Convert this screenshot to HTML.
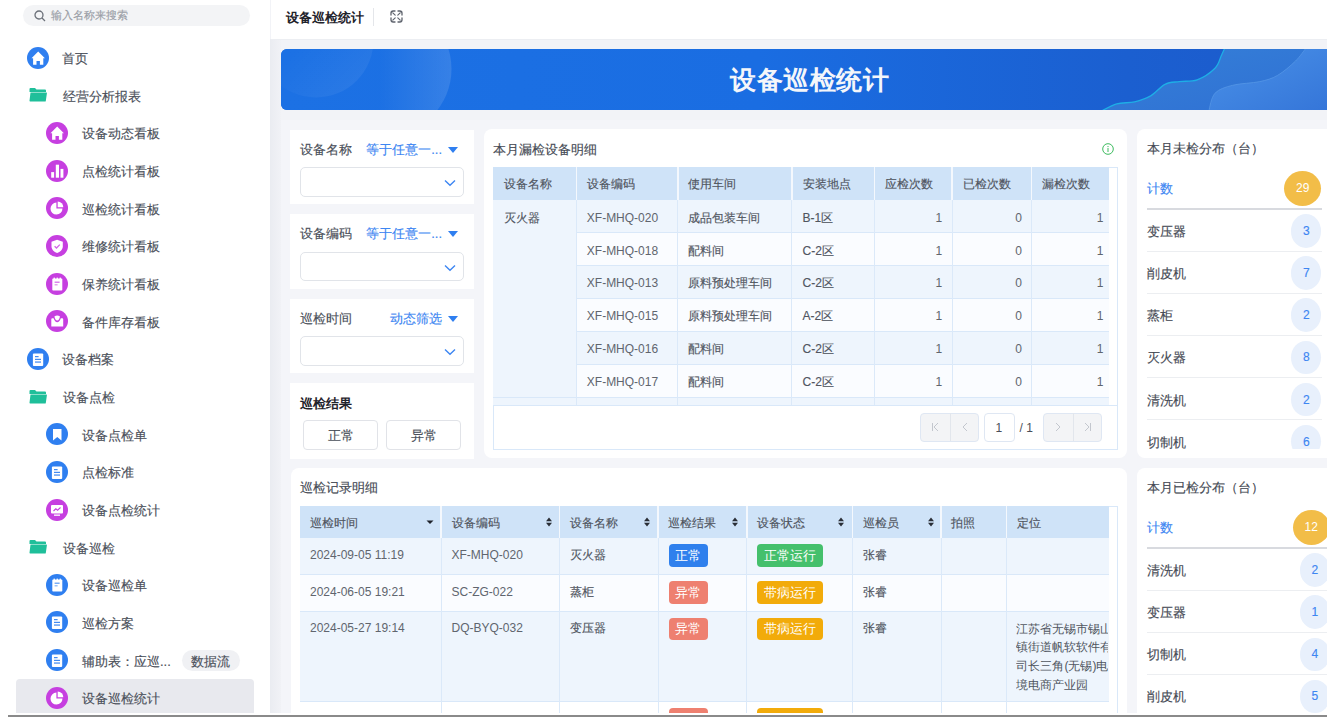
<!DOCTYPE html><html><head><meta charset="utf-8"><style>
*{box-sizing:border-box;margin:0;padding:0}
html,body{width:1327px;height:717px;overflow:hidden}
body{position:relative;background:#f2f3f7;font-family:"Liberation Sans",sans-serif;color:#4a4f59;font-size:13px}
.abs{position:absolute}
.t{position:absolute;white-space:nowrap;line-height:1;-webkit-text-stroke:0.15px currentColor}
.t.nb{-webkit-text-stroke:0}
#side{left:0;top:0;width:270px;height:717px;background:#fff}
#sideshadow{left:270px;top:39px;width:11px;height:678px;background:linear-gradient(90deg,#eaecf1,#f1f2f6)}
#search{left:23px;top:5px;width:227px;height:21px;border-radius:11px;background:#f3f4f6}
.ic{position:absolute;width:22px;height:22px;border-radius:50%}
.ic svg{position:absolute;left:0;top:0}
.blue{background:#2f7ff0}
.purple{background:#c63fe0}
#hdr{left:271px;top:0;width:1056px;height:40px;background:#fff;border-bottom:1px solid #eceef2}
#banner{left:281px;top:49px;width:1058px;height:61px;border-radius:6px;overflow:hidden;background:linear-gradient(90deg,#1d72e4 0%,#1a6fe3 40%,#1b62d3 75%,#1f5fd0 100%)}
#wrap{left:281px;top:120px;width:1060px;height:600px;background:#f4f5f9}
.card{position:absolute;background:#fff;border-radius:8px}
.fcard{position:absolute;background:#fff;left:290px;width:184px}
.tri{position:absolute;width:0;height:0;border-left:5px solid transparent;border-right:5px solid transparent;border-top:6px solid #2f7ff0}
.sel{position:absolute;left:10px;width:164px;height:30px;border:1px solid #e1e4e9;border-radius:5px;background:#fff}
.bottomline{left:8px;top:715.2px;width:1319px;height:1.8px;background:#8a8a8a}
.whitestrip{left:0;top:712.8px;width:1327px;height:2.6px;background:#fff}
</style></head><body>
<div id="wrap" class="abs"></div>
<div id="side" class="abs">
<div id="search" class="abs"><svg style="position:absolute;left:11px;top:5px" width="12" height="12" viewBox="0 0 12 12"><circle cx="5" cy="5" r="4" fill="none" stroke="#6b7079" stroke-width="1.3"/><line x1="8" y1="8" x2="11" y2="11" stroke="#6b7079" stroke-width="1.3"/></svg><span class="t" style="left:28px;top:5px;font-size:11px;color:#9a9ea6">输入名称来搜索</span></div>
<div class="ic blue" style="left:27px;top:46.70px"><svg width="22" height="22" viewBox="0 0 22 22"><path d="M11.2 4.6 L17.9 11.2 L16.3 11.2 L16.3 17.7 L12.9 17.7 L12.9 14.1 L9.5 14.1 L9.5 17.7 L6.1 17.7 L6.1 11.2 L4.5 11.2 Z" fill="#fff"/></svg></div>
<span class="t" style="left:62px;top:52.10px;font-size:13px;color:#4b505a">首页</span>
<svg class="abs" style="left:29px;top:88.35px" width="18" height="14" viewBox="0 0 18 14"><path d="M0.5 1 Q0.5 0 1.5 0 L6 0 L7.5 1.5 L16 1.5 Q17 1.5 17 2.5 L17 4 L0.5 4 Z" fill="#1fbf9a"/><path d="M1.5 4.5 L17.5 4.5 Q18 4.5 17.9 5.2 L16.8 13 Q16.7 13.6 16 13.6 L1.2 13.6 Q0.4 13.6 0.5 12.8 Z" fill="#1fbf9a"/></svg>
<span class="t" style="left:63px;top:89.75px;font-size:13px;color:#4b505a">经营分析报表</span>
<div class="ic purple" style="left:46px;top:122.00px"><svg width="22" height="22" viewBox="0 0 22 22"><path d="M11.2 4.6 L17.9 11.2 L16.3 11.2 L16.3 17.7 L12.9 17.7 L12.9 14.1 L9.5 14.1 L9.5 17.7 L6.1 17.7 L6.1 11.2 L4.5 11.2 Z" fill="#fff"/></svg></div>
<span class="t" style="left:82px;top:127.40px;font-size:13px;color:#4b505a">设备动态看板</span>
<div class="ic purple" style="left:46px;top:159.65px"><svg width="22" height="22" viewBox="0 0 22 22"><rect x="5.2" y="12.1" width="2.9" height="5.6" fill="#fff"/><rect x="9.8" y="4.7" width="3.2" height="13" fill="#fff"/><rect x="14.5" y="8.9" width="2.9" height="8.8" fill="#fff"/></svg></div>
<span class="t" style="left:82px;top:165.05px;font-size:13px;color:#4b505a">点检统计看板</span>
<div class="ic purple" style="left:46px;top:197.30px"><svg width="22" height="22" viewBox="0 0 22 22"><path d="M10.4 5.6 A6 6 0 1 0 16.5 11.6 L10.4 11.6 Z" fill="#fff"/><path d="M11.7 4.6 A5.6 5.6 0 0 1 17.3 10.2 L11.7 10.2 Z" fill="#fff"/></svg></div>
<span class="t" style="left:82px;top:202.70px;font-size:13px;color:#4b505a">巡检统计看板</span>
<div class="ic purple" style="left:46px;top:234.95px"><svg width="22" height="22" viewBox="0 0 22 22"><path d="M11.1 4.8 L16.8 6.8 L16.8 11.2 C16.8 14.6 14.3 16.8 11.1 17.9 C7.9 16.8 5.5 14.6 5.5 11.2 L5.5 6.8 Z" fill="#fff"/><path d="M8.6 11.2 L10.5 13 L13.8 9.6" fill="none" stroke="#c63fe0" stroke-width="1.3" stroke-opacity="0.8"/></svg></div>
<span class="t" style="left:82px;top:240.35px;font-size:13px;color:#4b505a">维修统计看板</span>
<div class="ic purple" style="left:46px;top:272.60px"><svg width="22" height="22" viewBox="0 0 22 22"><rect x="6.3" y="5.6" width="10" height="12" rx="0.8" fill="#fff"/><rect x="7.6" y="4.6" width="1.3" height="2" fill="#fff"/><rect x="10.6" y="4.6" width="1.3" height="2" fill="#fff"/><rect x="13.6" y="4.6" width="1.3" height="2" fill="#fff"/><rect x="8.6" y="8.6" width="5" height="1.2" fill="#c63fe0" fill-opacity="0.8"/><rect x="8.6" y="11.2" width="3" height="1.2" fill="#c63fe0" fill-opacity="0.6"/></svg></div>
<span class="t" style="left:82px;top:278.00px;font-size:13px;color:#4b505a">保养统计看板</span>
<div class="ic purple" style="left:46px;top:310.25px"><svg width="22" height="22" viewBox="0 0 22 22"><path d="M5.3 9.2 Q5.3 8.2 6.3 8.2 L7.6 8.2 Q9 12.2 11.2 12.2 Q13.4 12.2 14.8 8.2 L16.2 8.2 Q17.2 8.2 17.2 9.2 L17.2 16.6 L5.3 16.6 Z" fill="#fff"/><path d="M8.4 6.4 Q11.2 4.6 14 6.4 Q13.2 10.4 11.2 10.4 Q9.2 10.4 8.4 6.4 Z" fill="#fff"/></svg></div>
<span class="t" style="left:82px;top:315.65px;font-size:13px;color:#4b505a">备件库存看板</span>
<div class="ic blue" style="left:27px;top:347.90px"><svg width="22" height="22" viewBox="0 0 22 22"><rect x="5.9" y="5.4" width="10.3" height="12.5" rx="1" fill="#fff"/><rect x="8" y="8.1" width="3.6" height="1.1" fill="#2f7ff0"/><rect x="8" y="10.8" width="6" height="1.1" fill="#2f7ff0"/><rect x="8" y="13.5" width="6" height="1.1" fill="#2f7ff0"/></svg></div>
<span class="t" style="left:62px;top:353.30px;font-size:13px;color:#4b505a">设备档案</span>
<svg class="abs" style="left:29px;top:389.55px" width="18" height="14" viewBox="0 0 18 14"><path d="M0.5 1 Q0.5 0 1.5 0 L6 0 L7.5 1.5 L16 1.5 Q17 1.5 17 2.5 L17 4 L0.5 4 Z" fill="#1fbf9a"/><path d="M1.5 4.5 L17.5 4.5 Q18 4.5 17.9 5.2 L16.8 13 Q16.7 13.6 16 13.6 L1.2 13.6 Q0.4 13.6 0.5 12.8 Z" fill="#1fbf9a"/></svg>
<span class="t" style="left:63px;top:390.95px;font-size:13px;color:#4b505a">设备点检</span>
<div class="ic blue" style="left:46px;top:423.20px"><svg width="22" height="22" viewBox="0 0 22 22"><path d="M7 5.9 L15.5 5.9 L15.5 17.6 L11.25 13.9 L7 17.6 Z" fill="#fff"/></svg></div>
<span class="t" style="left:82px;top:428.60px;font-size:13px;color:#4b505a">设备点检单</span>
<div class="ic blue" style="left:46px;top:460.85px"><svg width="22" height="22" viewBox="0 0 22 22"><rect x="5.9" y="5.4" width="10.3" height="12.5" rx="1" fill="#fff"/><rect x="8" y="8.1" width="3.6" height="1.1" fill="#2f7ff0"/><rect x="8" y="10.8" width="6" height="1.1" fill="#2f7ff0"/><rect x="8" y="13.5" width="6" height="1.1" fill="#2f7ff0"/></svg></div>
<span class="t" style="left:82px;top:466.25px;font-size:13px;color:#4b505a">点检标准</span>
<div class="ic purple" style="left:46px;top:498.50px"><svg width="22" height="22" viewBox="0 0 22 22"><rect x="5" y="6" width="12" height="8.5" rx="1" fill="#fff"/><rect x="8" y="15.5" width="6" height="1.3" fill="#fff"/><path d="M7.5 12 L9.8 9.8 L11.6 11.2 L14.5 8.5" fill="none" stroke="#c63fe0" stroke-width="1.1"/></svg></div>
<span class="t" style="left:82px;top:503.90px;font-size:13px;color:#4b505a">设备点检统计</span>
<svg class="abs" style="left:29px;top:540.15px" width="18" height="14" viewBox="0 0 18 14"><path d="M0.5 1 Q0.5 0 1.5 0 L6 0 L7.5 1.5 L16 1.5 Q17 1.5 17 2.5 L17 4 L0.5 4 Z" fill="#1fbf9a"/><path d="M1.5 4.5 L17.5 4.5 Q18 4.5 17.9 5.2 L16.8 13 Q16.7 13.6 16 13.6 L1.2 13.6 Q0.4 13.6 0.5 12.8 Z" fill="#1fbf9a"/></svg>
<span class="t" style="left:63px;top:541.55px;font-size:13px;color:#4b505a">设备巡检</span>
<div class="ic blue" style="left:46px;top:573.80px"><svg width="22" height="22" viewBox="0 0 22 22"><rect x="6.3" y="5.6" width="10" height="12" rx="0.8" fill="#fff"/><rect x="7.6" y="4.6" width="1.3" height="2" fill="#fff"/><rect x="10.6" y="4.6" width="1.3" height="2" fill="#fff"/><rect x="13.6" y="4.6" width="1.3" height="2" fill="#fff"/><rect x="8.6" y="8.6" width="5" height="1.2" fill="#2f7ff0" fill-opacity="0.8"/><rect x="8.6" y="11.2" width="3" height="1.2" fill="#2f7ff0" fill-opacity="0.6"/></svg></div>
<span class="t" style="left:82px;top:579.20px;font-size:13px;color:#4b505a">设备巡检单</span>
<div class="ic blue" style="left:46px;top:611.45px"><svg width="22" height="22" viewBox="0 0 22 22"><rect x="5.9" y="5.4" width="10.3" height="12.5" rx="1" fill="#fff"/><rect x="8" y="8.1" width="3.6" height="1.1" fill="#2f7ff0"/><rect x="8" y="10.8" width="6" height="1.1" fill="#2f7ff0"/><rect x="8" y="13.5" width="6" height="1.1" fill="#2f7ff0"/></svg></div>
<span class="t" style="left:82px;top:616.85px;font-size:13px;color:#4b505a">巡检方案</span>
<div class="ic blue" style="left:46px;top:649.10px"><svg width="22" height="22" viewBox="0 0 22 22"><rect x="5.9" y="5.4" width="10.3" height="12.5" rx="1" fill="#fff"/><rect x="8" y="8.1" width="3.6" height="1.1" fill="#2f7ff0"/><rect x="8" y="10.8" width="6" height="1.1" fill="#2f7ff0"/><rect x="8" y="13.5" width="6" height="1.1" fill="#2f7ff0"/></svg></div>
<span class="t" style="left:82px;top:654.50px;font-size:13px;color:#4b505a">辅助表：应巡...</span>
<div class="abs" style="left:182px;top:649.60px;width:58px;height:21px;border-radius:11px;background:#f0f1f4"></div>
<span class="t" style="left:191px;top:654.50px;font-size:13px;color:#4b505a">数据流</span>
<div class="abs" style="left:16px;top:678.75px;width:238px;height:40px;border-radius:4px;background:#e8e9ee"></div>
<div class="ic purple" style="left:46px;top:686.75px"><svg width="22" height="22" viewBox="0 0 22 22"><path d="M10.4 5.6 A6 6 0 1 0 16.5 11.6 L10.4 11.6 Z" fill="#fff"/><path d="M11.7 4.6 A5.6 5.6 0 0 1 17.3 10.2 L11.7 10.2 Z" fill="#fff"/></svg></div>
<span class="t" style="left:82px;top:692.15px;font-size:13px;color:#4b505a">设备巡检统计</span>
</div>
<div id="sideshadow" class="abs"></div>
<div id="hdr" class="abs"><span class="t nb" style="left:15px;top:11px;font-size:13px;font-weight:bold;color:#1f232b">设备巡检统计</span><div class="abs" style="left:102px;top:8px;width:1px;height:18px;background:#e4e6ea"></div><svg class="abs" style="left:118.8px;top:10px" width="13" height="13" viewBox="0 0 13 13" fill="none" stroke="#5d626c" stroke-width="1.3" stroke-linecap="round"><path d="M1 5V3.2Q1 1 3.2 1H5M8 1H9.8Q12 1 12 3.2V5M12 8V9.8Q12 12 9.8 12H8M5 12H3.2Q1 12 1 9.8V8"/><path d="M2.8 2.8L5.2 5.2M10.2 2.8L7.8 5.2M10.2 10.2L7.8 7.8M2.8 10.2L5.2 7.8" stroke-width="1.1"/></svg></div>
<div id="banner" class="abs"><svg class="abs" style="left:0;top:0" width="1058" height="61" viewBox="0 0 1058 61"><defs><linearGradient id="bg" x1="0" y1="0" x2="1" y2="0"><stop offset="0" stop-color="#1c71e4"/><stop offset="0.45" stop-color="#1a6de2"/><stop offset="0.8" stop-color="#1b5fd0"/><stop offset="1" stop-color="#1c5acb"/></linearGradient><linearGradient id="c2" x1="0" y1="0" x2="1" y2="0"><stop offset="0.45" stop-color="#fff" stop-opacity="0"/><stop offset="1" stop-color="#fff" stop-opacity="0.12"/></linearGradient><linearGradient id="c1" x1="0" y1="0" x2="1" y2="1"><stop offset="0.45" stop-color="#fff" stop-opacity="0.0"/><stop offset="1" stop-color="#fff" stop-opacity="0.08"/></linearGradient><linearGradient id="wv1" x1="0" y1="0" x2="1" y2="1"><stop offset="0" stop-color="#3580d8"/><stop offset="1" stop-color="#2f6fd3"/></linearGradient><linearGradient id="wv2" x1="0" y1="0" x2="1" y2="1"><stop offset="0" stop-color="#4a92e8"/><stop offset="1" stop-color="#3474d8"/></linearGradient></defs><rect width="1058" height="61" fill="url(#bg)"/><circle cx="104" cy="20" r="66.5" fill="url(#c2)"/><circle cx="35" cy="-9" r="57.5" fill="url(#c1)"/><path d="M820.6 62.0 C823.1 60.8 830.3 56.4 835.8 54.9 C841.3 53.4 847.9 54.1 853.6 52.8 C859.2 51.5 864.6 49.8 869.7 46.9 C874.8 44.0 879.2 37.7 884.0 35.3 C888.8 32.9 892.9 33.3 898.3 32.6 C903.7 31.8 910.2 33.0 916.2 30.8 C922.2 28.6 930.0 23.2 934.0 19.2 C938.0 15.2 938.7 10.1 940.3 6.7 C941.9 3.3 943.2 0.3 943.8 -1.0 L1058 -1 L1058 62 Z" fill="url(#wv1)"/><path d="M820.6 62.0 C823.1 60.8 830.3 56.4 835.8 54.9 C841.3 53.4 847.9 54.1 853.6 52.8 C859.2 51.5 864.6 49.8 869.7 46.9 C874.8 44.0 879.2 37.7 884.0 35.3 C888.8 32.9 892.9 33.3 898.3 32.6 C903.7 31.8 910.2 33.0 916.2 30.8 C922.2 28.6 930.0 23.2 934.0 19.2 C938.0 15.2 938.7 10.1 940.3 6.7 C941.9 3.3 943.2 0.3 943.8 -1.0" fill="none" stroke="#1eaee6" stroke-width="1.3"/><path d="M927.8 62.0 C928.8 59.0 930.0 48.5 934.0 44.2 C938.0 39.9 944.5 38.1 951.9 36.2 C959.4 34.3 971.3 34.2 978.7 32.6 C986.1 31.0 990.5 29.8 996.5 26.4 C1002.5 23.0 1009.7 16.7 1014.4 12.1 C1019.2 7.5 1023.2 1.2 1025.0 -1.0 L1058 -1 L1058 62 Z" fill="url(#wv2)"/><path d="M927.8 62.0 C928.8 59.0 930.0 48.5 934.0 44.2 C938.0 39.9 944.5 38.1 951.9 36.2 C959.4 34.3 971.3 34.2 978.7 32.6 C986.1 31.0 990.5 29.8 996.5 26.4 C1002.5 23.0 1009.7 16.7 1014.4 12.1 C1019.2 7.5 1023.2 1.2 1025.0 -1.0" fill="none" stroke="#5d9eea" stroke-width="1" stroke-opacity="0.6"/></svg><span class="t nb" style="left:449.3px;top:18.2px;font-size:26.4px;letter-spacing:0.5px;font-weight:bold;color:#f4f6fa">设备巡检统计</span></div>
<div class="fcard" style="top:129.5px;height:74.6px">
<span class="t" style="left:10px;top:13.4px;font-size:13px;color:#4a4f59">设备名称</span>
<span class="t" style="left:76.2px;top:13.4px;font-size:13px;color:#3d86f2">等于任意一...</span>
<div class="tri" style="left:158px;top:17px"></div>
<div class="sel" style="top:37.7px;height:29.6px"><svg class="abs" style="left:143px;top:11px" width="12" height="8" viewBox="0 0 12 8"><path d="M1 1.5 L6 6.2 L11 1.5" fill="none" stroke="#3d86f2" stroke-width="1.4"/></svg></div>
</div>
<div class="fcard" style="top:214.1px;height:74.6px">
<span class="t" style="left:10px;top:13.4px;font-size:13px;color:#4a4f59">设备编码</span>
<span class="t" style="left:76.2px;top:13.4px;font-size:13px;color:#3d86f2">等于任意一...</span>
<div class="tri" style="left:158px;top:17px"></div>
<div class="sel" style="top:37.7px;height:29.6px"><svg class="abs" style="left:143px;top:11px" width="12" height="8" viewBox="0 0 12 8"><path d="M1 1.5 L6 6.2 L11 1.5" fill="none" stroke="#3d86f2" stroke-width="1.4"/></svg></div>
</div>
<div class="fcard" style="top:298.8px;height:74.6px">
<span class="t" style="left:10px;top:13.4px;font-size:13px;color:#4a4f59">巡检时间</span>
<span class="t" style="left:100.0px;top:13.4px;font-size:13px;color:#3d86f2">动态筛选</span>
<div class="tri" style="left:158px;top:17px"></div>
<div class="sel" style="top:37.7px;height:29.6px"><svg class="abs" style="left:143px;top:11px" width="12" height="8" viewBox="0 0 12 8"><path d="M1 1.5 L6 6.2 L11 1.5" fill="none" stroke="#3d86f2" stroke-width="1.4"/></svg></div>
</div>
<div class="fcard" style="top:383.3px;height:75.3px"><span class="t nb" style="left:10px;top:13.5px;font-size:13px;font-weight:bold;color:#1f232b">巡检结果</span><div class="abs" style="left:13.3px;top:36.7px;width:75px;height:29.8px;border:1px solid #e1e3e8;border-radius:4px"></div><span class="t" style="left:37.5px;top:45.7px;font-size:13px;color:#4a4f59">正常</span><div class="abs" style="left:96.1px;top:36.7px;width:75.3px;height:29.8px;border:1px solid #e1e3e8;border-radius:4px"></div><span class="t" style="left:120.5px;top:45.7px;font-size:13px;color:#4a4f59">异常</span></div>
<div class="card" style="left:484.2px;top:129.2px;width:642.5px;height:328.6px">
<span class="t" style="left:9.2px;top:13.6px;font-size:13px;color:#454a54">本月漏检设备明细</span>
<svg class="abs" style="left:618.3px;top:13.9px" width="12" height="12" viewBox="0 0 12 12"><circle cx="6" cy="6" r="5.3" fill="none" stroke="#3dbb5e" stroke-width="1"/><rect x="5.5" y="5" width="1" height="4" fill="#3dbb5e"/><rect x="5.5" y="3" width="1" height="1.1" fill="#3dbb5e"/></svg>
</div>
<div class="abs" style="left:493.4px;top:167.4px;width:624.8px;height:282.3px;border:1px solid #d9e8f9;background:#fff"></div>
<div class="abs" style="left:493.4px;top:167.4px;width:615.4px;height:32.5px;background:#cfe3f8"></div>
<span class="t" style="left:504.0px;top:178.2px;font-size:12px;color:#50555f">设备名称</span>
<span class="t" style="left:586.8px;top:178.2px;font-size:12px;color:#50555f">设备编码</span>
<span class="t" style="left:688.3px;top:178.2px;font-size:12px;color:#50555f">使用车间</span>
<span class="t" style="left:802.5px;top:178.2px;font-size:12px;color:#50555f">安装地点</span>
<span class="t" style="left:885.1px;top:178.2px;font-size:12px;color:#50555f">应检次数</span>
<span class="t" style="left:962.6px;top:178.2px;font-size:12px;color:#50555f">已检次数</span>
<span class="t" style="left:1042.0px;top:178.2px;font-size:12px;color:#50555f">漏检次数</span>
<div class="abs" style="left:576.2px;top:199.9px;width:532.6px;height:32.9px;background:#eef5fd"></div>
<span class="t nb" style="left:586.8px;top:211.7px;font-size:12px;color:#60656e">XF-MHQ-020</span>
<span class="t" style="left:688.3px;top:211.7px;font-size:12px;color:#50555f">成品包装车间</span>
<span class="t" style="left:802.5px;top:211.7px;font-size:12px;color:#50555f">B-1区</span>
<span class="t nb" style="right:384.8px;top:211.7px;font-size:12px;color:#60656e">1</span>
<span class="t nb" style="right:305.2px;top:211.7px;font-size:12px;color:#60656e">0</span>
<span class="t nb" style="right:223.6px;top:211.7px;font-size:12px;color:#60656e">1</span>
<div class="abs" style="left:576.2px;top:232.8px;width:532.6px;height:32.9px;background:#fafcff"></div>
<div class="abs" style="left:576.2px;top:232.2px;width:532.6px;height:1px;background:#d9e8f9"></div>
<span class="t nb" style="left:586.8px;top:244.6px;font-size:12px;color:#60656e">XF-MHQ-018</span>
<span class="t" style="left:688.3px;top:244.6px;font-size:12px;color:#50555f">配料间</span>
<span class="t" style="left:802.5px;top:244.6px;font-size:12px;color:#50555f">C-2区</span>
<span class="t nb" style="right:384.8px;top:244.6px;font-size:12px;color:#60656e">1</span>
<span class="t nb" style="right:305.2px;top:244.6px;font-size:12px;color:#60656e">0</span>
<span class="t nb" style="right:223.6px;top:244.6px;font-size:12px;color:#60656e">1</span>
<div class="abs" style="left:576.2px;top:265.6px;width:532.6px;height:32.9px;background:#eef5fd"></div>
<div class="abs" style="left:576.2px;top:265.1px;width:532.6px;height:1px;background:#d9e8f9"></div>
<span class="t nb" style="left:586.8px;top:277.4px;font-size:12px;color:#60656e">XF-MHQ-013</span>
<span class="t" style="left:688.3px;top:277.4px;font-size:12px;color:#50555f">原料预处理车间</span>
<span class="t" style="left:802.5px;top:277.4px;font-size:12px;color:#50555f">C-2区</span>
<span class="t nb" style="right:384.8px;top:277.4px;font-size:12px;color:#60656e">1</span>
<span class="t nb" style="right:305.2px;top:277.4px;font-size:12px;color:#60656e">0</span>
<span class="t nb" style="right:223.6px;top:277.4px;font-size:12px;color:#60656e">1</span>
<div class="abs" style="left:576.2px;top:298.5px;width:532.6px;height:32.9px;background:#fafcff"></div>
<div class="abs" style="left:576.2px;top:298.0px;width:532.6px;height:1px;background:#d9e8f9"></div>
<span class="t nb" style="left:586.8px;top:310.3px;font-size:12px;color:#60656e">XF-MHQ-015</span>
<span class="t" style="left:688.3px;top:310.3px;font-size:12px;color:#50555f">原料预处理车间</span>
<span class="t" style="left:802.5px;top:310.3px;font-size:12px;color:#50555f">A-2区</span>
<span class="t nb" style="right:384.8px;top:310.3px;font-size:12px;color:#60656e">1</span>
<span class="t nb" style="right:305.2px;top:310.3px;font-size:12px;color:#60656e">0</span>
<span class="t nb" style="right:223.6px;top:310.3px;font-size:12px;color:#60656e">1</span>
<div class="abs" style="left:576.2px;top:331.3px;width:532.6px;height:32.9px;background:#eef5fd"></div>
<div class="abs" style="left:576.2px;top:330.8px;width:532.6px;height:1px;background:#d9e8f9"></div>
<span class="t nb" style="left:586.8px;top:343.1px;font-size:12px;color:#60656e">XF-MHQ-016</span>
<span class="t" style="left:688.3px;top:343.1px;font-size:12px;color:#50555f">配料间</span>
<span class="t" style="left:802.5px;top:343.1px;font-size:12px;color:#50555f">C-2区</span>
<span class="t nb" style="right:384.8px;top:343.1px;font-size:12px;color:#60656e">1</span>
<span class="t nb" style="right:305.2px;top:343.1px;font-size:12px;color:#60656e">0</span>
<span class="t nb" style="right:223.6px;top:343.1px;font-size:12px;color:#60656e">1</span>
<div class="abs" style="left:576.2px;top:364.1px;width:532.6px;height:32.9px;background:#fafcff"></div>
<div class="abs" style="left:576.2px;top:363.6px;width:532.6px;height:1px;background:#d9e8f9"></div>
<span class="t nb" style="left:586.8px;top:375.9px;font-size:12px;color:#60656e">XF-MHQ-017</span>
<span class="t" style="left:688.3px;top:375.9px;font-size:12px;color:#50555f">配料间</span>
<span class="t" style="left:802.5px;top:375.9px;font-size:12px;color:#50555f">C-2区</span>
<span class="t nb" style="right:384.8px;top:375.9px;font-size:12px;color:#60656e">1</span>
<span class="t nb" style="right:305.2px;top:375.9px;font-size:12px;color:#60656e">0</span>
<span class="t nb" style="right:223.6px;top:375.9px;font-size:12px;color:#60656e">1</span>
<div class="abs" style="left:576.2px;top:397.0px;width:532.6px;height:8.3px;background:#eef5fd"></div>
<div class="abs" style="left:576.2px;top:396.5px;width:532.6px;height:1px;background:#d9e8f9"></div>
<div class="abs" style="left:493.4px;top:199.9px;width:82.8px;height:197.1px;background:#eef5fd"></div>
<div class="abs" style="left:493.4px;top:397.0px;width:82.8px;height:8.3px;background:#eef5fd"></div>
<div class="abs" style="left:493.4px;top:396.5px;width:82.8px;height:1px;background:#d9e8f9"></div>
<span class="t" style="left:504.0px;top:211.7px;font-size:12px;color:#50555f">灭火器</span>
<div class="abs" style="left:575.7px;top:168.4px;width:1px;height:236.9px;background:#dbe9f9"></div>
<div class="abs" style="left:677.2px;top:168.4px;width:1px;height:236.9px;background:#dbe9f9"></div>
<div class="abs" style="left:791.4px;top:168.4px;width:1px;height:236.9px;background:#dbe9f9"></div>
<div class="abs" style="left:874.0px;top:168.4px;width:1px;height:236.9px;background:#dbe9f9"></div>
<div class="abs" style="left:951.5px;top:168.4px;width:1px;height:236.9px;background:#dbe9f9"></div>
<div class="abs" style="left:1030.9px;top:168.4px;width:1px;height:236.9px;background:#dbe9f9"></div>
<div class="abs" style="left:575.5px;top:167.4px;width:1.5px;height:32.5px;background:#f4f8fd"></div>
<div class="abs" style="left:677.0px;top:167.4px;width:1.5px;height:32.5px;background:#f4f8fd"></div>
<div class="abs" style="left:791.1px;top:167.4px;width:1.5px;height:32.5px;background:#f4f8fd"></div>
<div class="abs" style="left:873.8px;top:167.4px;width:1.5px;height:32.5px;background:#f4f8fd"></div>
<div class="abs" style="left:951.2px;top:167.4px;width:1.5px;height:32.5px;background:#f4f8fd"></div>
<div class="abs" style="left:1030.7px;top:167.4px;width:1.5px;height:32.5px;background:#f4f8fd"></div>
<div class="abs" style="left:493.4px;top:405.3px;width:624.8px;height:1px;background:#d9e8f9"></div>
<div class="abs" style="left:919.9px;top:412.5px;width:59.4px;height:29.2px;border:1px solid #dfe7f3;border-radius:4px;background:#f3f4f6"></div>
<div class="abs" style="left:949.6px;top:413px;width:1px;height:28.2px;background:#e2e6ec"></div>
<div class="abs" style="left:984px;top:412.5px;width:30.7px;height:29.2px;border:1px solid #dfe7f3;border-radius:4px;background:#fff"></div>
<span class="t nb" style="left:995.5px;top:422px;font-size:12px;color:#4a4f59">1</span>
<span class="t nb" style="left:1019.5px;top:422px;font-size:12px;color:#4a4f59">/ 1</span>
<div class="abs" style="left:1042.9px;top:412.5px;width:59.4px;height:29.2px;border:1px solid #dfe7f3;border-radius:4px;background:#f3f4f6"></div>
<div class="abs" style="left:1072.6px;top:413px;width:1px;height:28.2px;background:#e2e6ec"></div>
<svg class="abs" style="left:930.0px;top:422.0px" width="10" height="10" viewBox="0 0 10 10" fill="none" stroke="#c3c7ce" stroke-width="1"><path d="M2.5 1v8M8 1L4 5l4 4"/></svg>
<svg class="abs" style="left:959.5px;top:422.0px" width="10" height="10" viewBox="0 0 10 10" fill="none" stroke="#c3c7ce" stroke-width="1"><path d="M7 1L3 5l4 4"/></svg>
<svg class="abs" style="left:1053.0px;top:422.0px" width="10" height="10" viewBox="0 0 10 10" fill="none" stroke="#c3c7ce" stroke-width="1"><path d="M3 1l4 4-4 4"/></svg>
<svg class="abs" style="left:1082.5px;top:422.0px" width="10" height="10" viewBox="0 0 10 10" fill="none" stroke="#c3c7ce" stroke-width="1"><path d="M2 1l4 4-4 4M7.5 1v8"/></svg>
<div class="card" style="left:290.7px;top:467.9px;width:836px;height:300px">
<span class="t" style="left:9px;top:13.3px;font-size:13px;color:#454a54">巡检记录明细</span>
</div>
<div class="abs" style="left:299.7px;top:505.9px;width:818.6px;height:260px;border:1px solid #d9e8f9;background:#fff"></div>
<div class="abs" style="left:299.7px;top:505.9px;width:808.9px;height:31.8px;background:#cfe3f8"></div>
<span class="t" style="left:310.0px;top:516.7px;font-size:12px;color:#50555f">巡检时间</span>
<span class="t" style="left:451.5px;top:516.7px;font-size:12px;color:#50555f">设备编码</span>
<span class="t" style="left:569.8px;top:516.7px;font-size:12px;color:#50555f">设备名称</span>
<span class="t" style="left:668.3px;top:516.7px;font-size:12px;color:#50555f">巡检结果</span>
<span class="t" style="left:757.2px;top:516.7px;font-size:12px;color:#50555f">设备状态</span>
<span class="t" style="left:862.8px;top:516.7px;font-size:12px;color:#50555f">巡检员</span>
<span class="t" style="left:951.4px;top:516.7px;font-size:12px;color:#50555f">拍照</span>
<span class="t" style="left:1016.5px;top:516.7px;font-size:12px;color:#50555f">定位</span>
<div class="abs" style="left:440.4px;top:505.9px;width:1.5px;height:31.8px;background:#f4f8fd"></div>
<div class="abs" style="left:558.8px;top:505.9px;width:1.5px;height:31.8px;background:#f4f8fd"></div>
<div class="abs" style="left:657.2px;top:505.9px;width:1.5px;height:31.8px;background:#f4f8fd"></div>
<div class="abs" style="left:746.1px;top:505.9px;width:1.5px;height:31.8px;background:#f4f8fd"></div>
<div class="abs" style="left:851.8px;top:505.9px;width:1.5px;height:31.8px;background:#f4f8fd"></div>
<div class="abs" style="left:940.4px;top:505.9px;width:1.5px;height:31.8px;background:#f4f8fd"></div>
<div class="abs" style="left:1005.5px;top:505.9px;width:1.5px;height:31.8px;background:#f4f8fd"></div>
<svg class="abs" style="left:425.8px;top:516.9px" width="8" height="10" viewBox="0 0 8 10"><path d="M0.5 3.5H7.5L4 7Z" fill="#1f232b"/></svg>
<svg class="abs" style="left:544.7px;top:516.9px" width="8" height="10" viewBox="0 0 8 10"><path d="M4 0.6L7 4.3H1Z M4 9.4L7 5.7H1Z" fill="#2a2e36"/></svg>
<svg class="abs" style="left:643.3px;top:516.9px" width="8" height="10" viewBox="0 0 8 10"><path d="M4 0.6L7 4.3H1Z M4 9.4L7 5.7H1Z" fill="#2a2e36"/></svg>
<svg class="abs" style="left:730.5px;top:516.9px" width="8" height="10" viewBox="0 0 8 10"><path d="M4 0.6L7 4.3H1Z M4 9.4L7 5.7H1Z" fill="#2a2e36"/></svg>
<svg class="abs" style="left:837.3px;top:516.9px" width="8" height="10" viewBox="0 0 8 10"><path d="M4 0.6L7 4.3H1Z M4 9.4L7 5.7H1Z" fill="#2a2e36"/></svg>
<svg class="abs" style="left:926.5px;top:516.9px" width="8" height="10" viewBox="0 0 8 10"><path d="M4 0.6L7 4.3H1Z M4 9.4L7 5.7H1Z" fill="#2a2e36"/></svg>
<div class="abs" style="left:299.7px;top:537.7px;width:808.9px;height:36.7px;background:#eef5fd"></div>
<span class="t nb" style="left:310.0px;top:549.0px;font-size:12px;color:#60656e">2024-09-05 11:19</span>
<span class="t nb" style="left:451.5px;top:549.0px;font-size:12px;color:#60656e">XF-MHQ-020</span>
<span class="t" style="left:569.8px;top:549.0px;font-size:12px;color:#50555f">灭火器</span>
<div class="abs" style="left:668.6px;top:544.3px;width:39.2px;height:22.7px;border-radius:4px;background:#2f80ed"></div>
<span class="t nb" style="left:675.2px;top:549.0px;font-size:13px;color:#fff">正常</span>
<div class="abs" style="left:756.5px;top:544.3px;width:66.1px;height:22.7px;border-radius:4px;background:#45c06c"></div>
<span class="t nb" style="left:763.5px;top:549.0px;font-size:13px;color:#fff">正常运行</span>
<span class="t" style="left:862.8px;top:549.0px;font-size:12px;color:#50555f">张睿</span>
<div class="abs" style="left:299.7px;top:574.4px;width:808.9px;height:36.6px;background:#fafcff"></div>
<div class="abs" style="left:299.7px;top:573.9px;width:808.9px;height:1px;background:#d9e8f9"></div>
<span class="t nb" style="left:310.0px;top:585.7px;font-size:12px;color:#60656e">2024-06-05 19:21</span>
<span class="t nb" style="left:451.5px;top:585.7px;font-size:12px;color:#60656e">SC-ZG-022</span>
<span class="t" style="left:569.8px;top:585.7px;font-size:12px;color:#50555f">蒸柜</span>
<div class="abs" style="left:668.6px;top:581.0px;width:39.2px;height:22.7px;border-radius:4px;background:#ee8070"></div>
<span class="t nb" style="left:675.2px;top:585.7px;font-size:13px;color:#fff">异常</span>
<div class="abs" style="left:756.5px;top:581.0px;width:66.1px;height:22.7px;border-radius:4px;background:#f2ab0a"></div>
<span class="t nb" style="left:763.5px;top:585.7px;font-size:13px;color:#fff">带病运行</span>
<span class="t" style="left:862.8px;top:585.7px;font-size:12px;color:#50555f">张睿</span>
<div class="abs" style="left:299.7px;top:611.0px;width:808.9px;height:90.5px;background:#eef5fd"></div>
<div class="abs" style="left:299.7px;top:610.5px;width:808.9px;height:1px;background:#d9e8f9"></div>
<span class="t nb" style="left:310.0px;top:622.3px;font-size:12px;color:#60656e">2024-05-27 19:14</span>
<span class="t nb" style="left:451.5px;top:622.3px;font-size:12px;color:#60656e">DQ-BYQ-032</span>
<span class="t" style="left:569.8px;top:622.3px;font-size:12px;color:#50555f">变压器</span>
<div class="abs" style="left:668.6px;top:617.6px;width:39.2px;height:22.7px;border-radius:4px;background:#ee8070"></div>
<span class="t nb" style="left:675.2px;top:622.3px;font-size:13px;color:#fff">异常</span>
<div class="abs" style="left:756.5px;top:617.6px;width:66.1px;height:22.7px;border-radius:4px;background:#f2ab0a"></div>
<span class="t nb" style="left:763.5px;top:622.3px;font-size:13px;color:#fff">带病运行</span>
<span class="t" style="left:862.8px;top:622.3px;font-size:12px;color:#50555f">张睿</span>
<div class="abs" style="left:299.7px;top:701.5px;width:808.9px;height:58.5px;background:#fff"></div>
<div class="abs" style="left:299.7px;top:701.0px;width:808.9px;height:1px;background:#d9e8f9"></div>
<div class="abs" style="left:668.6px;top:708.1px;width:39.2px;height:22.7px;border-radius:4px;background:#ee8070"></div>
<span class="t nb" style="left:675.2px;top:712.8px;font-size:13px;color:#fff">异常</span>
<div class="abs" style="left:756.5px;top:708.1px;width:66.1px;height:22.7px;border-radius:4px;background:#f2ab0a"></div>
<span class="t nb" style="left:763.5px;top:712.8px;font-size:13px;color:#fff">带病运行</span>
<span class="t" style="left:862.8px;top:712.8px;font-size:12px;color:#50555f">张睿</span>
<div class="abs" style="left:440.7px;top:537.7px;width:1px;height:222.3px;background:#dbe9f9"></div>
<div class="abs" style="left:559.0px;top:537.7px;width:1px;height:222.3px;background:#dbe9f9"></div>
<div class="abs" style="left:657.5px;top:537.7px;width:1px;height:222.3px;background:#dbe9f9"></div>
<div class="abs" style="left:746.4px;top:537.7px;width:1px;height:222.3px;background:#dbe9f9"></div>
<div class="abs" style="left:852.0px;top:537.7px;width:1px;height:222.3px;background:#dbe9f9"></div>
<div class="abs" style="left:940.6px;top:537.7px;width:1px;height:222.3px;background:#dbe9f9"></div>
<div class="abs" style="left:1005.7px;top:537.7px;width:1px;height:222.3px;background:#dbe9f9"></div>
<div class="abs" style="left:1016.4px;top:619.5px;width:92px;height:80px;overflow:hidden;font-size:12px;line-height:18.7px;color:#50555f;white-space:nowrap">江苏省无锡市锡山区<br>镇街道帆软软件有限公<br>司长三角(无锡)电子商<br>境电商产业园</div>
<div class="card" style="left:1136.8px;top:128.8px;width:200px;height:329.4px;overflow:hidden">
<span class="t" style="left:9.8px;top:13.6px;font-size:13px;color:#454a54">本月未检分布（台）</span>
</div>
<div class="abs" style="left:0;top:0;width:1327px;height:449.3px;overflow:hidden">
<span class="t" style="left:1146.6px;top:181.5px;font-size:13px;color:#3d86f2">计数</span>
<div class="abs" style="left:1284.3px;top:170.8px;width:37px;height:35px;border-radius:50%;background:#f2bd48"></div>
<span class="t nb" style="left:1284.3px;top:182.3px;width:37px;text-align:center;font-size:12px;color:#fff">29</span>
<div class="abs" style="left:1146.6px;top:208.1px;width:175px;height:2px;background:#d8dadf"></div>
<span class="t" style="left:1146.6px;top:224.9px;font-size:13px;color:#454a54">变压器</span>
<div class="abs" style="left:1291.3px;top:214.1px;width:30px;height:33.6px;border-radius:50%;background:#e8f0fc"></div>
<span class="t" style="left:1291.3px;top:224.9px;width:30px;text-align:center;font-size:12px;color:#3d86f2">3</span>
<div class="abs" style="left:1146.6px;top:250.8px;width:175px;height:1px;background:#eceef1"></div>
<span class="t" style="left:1146.6px;top:267.0px;font-size:13px;color:#454a54">削皮机</span>
<div class="abs" style="left:1291.3px;top:256.2px;width:30px;height:33.6px;border-radius:50%;background:#e8f0fc"></div>
<span class="t" style="left:1291.3px;top:267.0px;width:30px;text-align:center;font-size:12px;color:#3d86f2">7</span>
<div class="abs" style="left:1146.6px;top:292.9px;width:175px;height:1px;background:#eceef1"></div>
<span class="t" style="left:1146.6px;top:309.2px;font-size:13px;color:#454a54">蒸柜</span>
<div class="abs" style="left:1291.3px;top:298.4px;width:30px;height:33.6px;border-radius:50%;background:#e8f0fc"></div>
<span class="t" style="left:1291.3px;top:309.2px;width:30px;text-align:center;font-size:12px;color:#3d86f2">2</span>
<div class="abs" style="left:1146.6px;top:335.1px;width:175px;height:1px;background:#eceef1"></div>
<span class="t" style="left:1146.6px;top:351.3px;font-size:13px;color:#454a54">灭火器</span>
<div class="abs" style="left:1291.3px;top:340.5px;width:30px;height:33.6px;border-radius:50%;background:#e8f0fc"></div>
<span class="t" style="left:1291.3px;top:351.3px;width:30px;text-align:center;font-size:12px;color:#3d86f2">8</span>
<div class="abs" style="left:1146.6px;top:377.2px;width:175px;height:1px;background:#eceef1"></div>
<span class="t" style="left:1146.6px;top:393.5px;font-size:13px;color:#454a54">清洗机</span>
<div class="abs" style="left:1291.3px;top:382.7px;width:30px;height:33.6px;border-radius:50%;background:#e8f0fc"></div>
<span class="t" style="left:1291.3px;top:393.5px;width:30px;text-align:center;font-size:12px;color:#3d86f2">2</span>
<div class="abs" style="left:1146.6px;top:419.4px;width:175px;height:1px;background:#eceef1"></div>
<span class="t" style="left:1146.6px;top:435.6px;font-size:13px;color:#454a54">切制机</span>
<div class="abs" style="left:1291.3px;top:424.8px;width:30px;height:33.6px;border-radius:50%;background:#e8f0fc"></div>
<span class="t" style="left:1291.3px;top:435.6px;width:30px;text-align:center;font-size:12px;color:#3d86f2">6</span>
<div class="abs" style="left:1146.6px;top:461.5px;width:175px;height:1px;background:#eceef1"></div>
</div>
<div class="card" style="left:1136.8px;top:467.9px;width:200px;height:300.0px;overflow:hidden">
<span class="t" style="left:9.8px;top:13.6px;font-size:13px;color:#454a54">本月已检分布（台）</span>
</div>
<div class="abs" style="left:0;top:0;width:1327px;height:717.0px;overflow:hidden">
<span class="t" style="left:1146.6px;top:520.6px;font-size:13px;color:#3d86f2">计数</span>
<div class="abs" style="left:1292.8px;top:509.9px;width:37px;height:35px;border-radius:50%;background:#f2bd48"></div>
<span class="t nb" style="left:1292.8px;top:521.4px;width:37px;text-align:center;font-size:12px;color:#fff">12</span>
<div class="abs" style="left:1146.6px;top:547.2px;width:185px;height:2px;background:#d8dadf"></div>
<span class="t" style="left:1146.6px;top:564.0px;font-size:13px;color:#454a54">清洗机</span>
<div class="abs" style="left:1299.8px;top:553.2px;width:30px;height:33.6px;border-radius:50%;background:#e8f0fc"></div>
<span class="t" style="left:1299.8px;top:564.0px;width:30px;text-align:center;font-size:12px;color:#3d86f2">2</span>
<div class="abs" style="left:1146.6px;top:589.9px;width:185px;height:1px;background:#eceef1"></div>
<span class="t" style="left:1146.6px;top:606.1px;font-size:13px;color:#454a54">变压器</span>
<div class="abs" style="left:1299.8px;top:595.3px;width:30px;height:33.6px;border-radius:50%;background:#e8f0fc"></div>
<span class="t" style="left:1299.8px;top:606.1px;width:30px;text-align:center;font-size:12px;color:#3d86f2">1</span>
<div class="abs" style="left:1146.6px;top:632.0px;width:185px;height:1px;background:#eceef1"></div>
<span class="t" style="left:1146.6px;top:648.3px;font-size:13px;color:#454a54">切制机</span>
<div class="abs" style="left:1299.8px;top:637.5px;width:30px;height:33.6px;border-radius:50%;background:#e8f0fc"></div>
<span class="t" style="left:1299.8px;top:648.3px;width:30px;text-align:center;font-size:12px;color:#3d86f2">4</span>
<div class="abs" style="left:1146.6px;top:674.2px;width:185px;height:1px;background:#eceef1"></div>
<span class="t" style="left:1146.6px;top:690.4px;font-size:13px;color:#454a54">削皮机</span>
<div class="abs" style="left:1299.8px;top:679.6px;width:30px;height:33.6px;border-radius:50%;background:#e8f0fc"></div>
<span class="t" style="left:1299.8px;top:690.4px;width:30px;text-align:center;font-size:12px;color:#3d86f2">5</span>
<div class="abs" style="left:1146.6px;top:716.3px;width:185px;height:1px;background:#eceef1"></div>
</div>
<div class="abs whitestrip"></div>
<div class="abs bottomline"></div>
</body></html>
